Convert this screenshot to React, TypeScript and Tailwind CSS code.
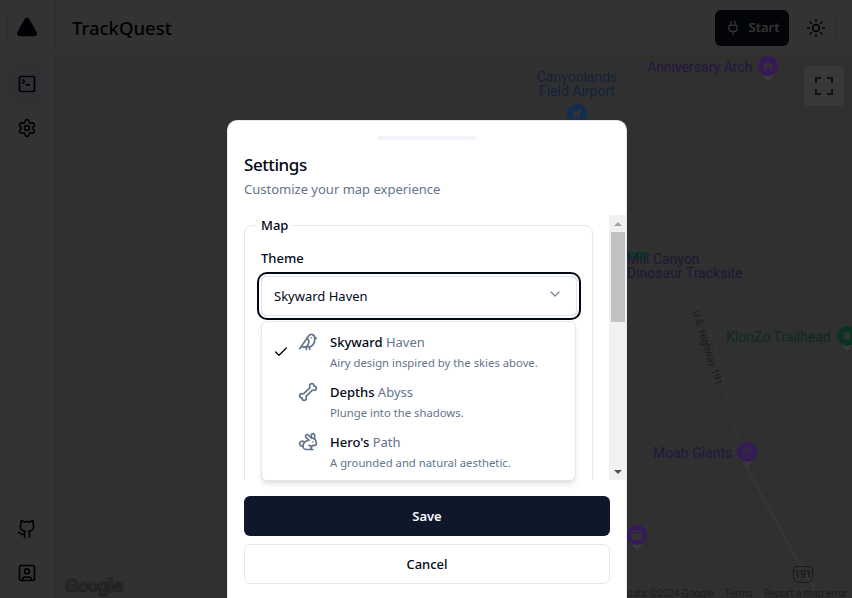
import React from 'react';
import {
  Bird,
  Bone,
  Check,
  ChevronDown,
  Github,
  Plug,
  Rabbit,
  Settings,
  SquareTerminal,
  SquareUser,
  Sun,
  Triangle,
  Camera,
  Plane,
  Landmark,
  Castle,
} from 'lucide-react';

const themes = [
  { icon: Bird, name: 'Skyward', rest: ' Haven', desc: 'Airy design inspired by the skies above.', selected: true },
  { icon: Bone, name: 'Depths', rest: ' Abyss', desc: 'Plunge into the shadows.', selected: false },
  { icon: Rabbit, name: "Hero's", rest: ' Path', desc: 'A grounded and natural aesthetic.', selected: false },
];

// grey point under a map pin
const PinTail = () => (
  <div className="absolute -bottom-[6px] left-1/2 -z-10 h-0 w-0 -translate-x-1/2 border-x-[9px] border-t-[12px] border-x-transparent border-t-[#3c3c3c]" />
);

const MapLayer = () => (
  <div className="absolute inset-0 isolate overflow-hidden font-['Roboto',sans-serif]">
    <svg width="852" height="598" className="absolute inset-0" fill="none" stroke="#343434" strokeWidth="1">
      <path d="M92 56 L86 68 L70 84 L68 98 L56 110" />
      <path d="M143 56 L136 70 L110 78 L90 90 L70 98" />
      <path d="M227 115 L204 134 L188 150 L186 170" />
      <path d="M112 510 L100 540 L80 570 L60 590" />
      <path d="M130 500 L110 510 L105 540 L80 585" />
      <path d="M195 545 L190 570 L175 598" />
      <path d="M627 245 L660 265 L695 300 L715 345 L730 410 L745 465" strokeWidth="1.5" />
      <path d="M630 330 L670 340 L680 375 L650 395" />
      <path d="M645 100 L655 90 L690 110 L740 135" />
      <path d="M745 465 L770 510 L800 565 L815 590" stroke="#353535" strokeWidth="3" />
      <path d="M640 530 L670 515 L700 490 L745 465" strokeWidth="1.5" />
      <path d="M770 450 L800 445 L820 460 L810 475" />
      <path d="M760 480 L790 490 L815 510 L818 520" />
      <path d="M740 585 L760 572 L790 578" />
    </svg>

    {/* labels */}
    <div className="absolute left-[520px] top-[70px] w-[114px] text-center text-sm leading-[14px] text-[#14223a]">
      Canyonlands<br />Field Airport
    </div>
    <div className="absolute left-[647px] top-[59px] text-sm leading-4 text-[#231642]">Anniversary Arch</div>
    <div className="absolute left-[627px] top-[252px] h-[7px] w-5 bg-[#0f3a26]" />
    <div className="absolute left-[627px] top-[252px] text-sm leading-[14px] text-[#1f1636]">
      Mill Canyon<br />Dinosaur Tracksite
    </div>
    <div className="absolute left-[726px] top-[329px] text-sm leading-4 text-[#0e2a1b]">KlonZo Trailhead</div>
    <div className="absolute left-[653px] top-[445px] text-sm leading-4 text-[#231642]">Moab Giants</div>
    <div className="absolute left-[662px] top-[342px] w-[90px] rotate-[72deg] text-center text-[10px] leading-3 text-[#1a1a1a]">
      U.S. Highway 191
    </div>

    {/* pins */}
    <div className="absolute left-[567px] top-[104px] flex h-5 w-5 items-center justify-center rounded-full bg-[#122c52]">
      <Plane size={12} fill="#333333" stroke="#333333" />
    </div>
    <div className="absolute left-[758px] top-[56px] flex h-5 w-5 items-center justify-center rounded-full bg-[#341a58]">
      <PinTail />
      <Camera size={12} fill="#333333" stroke="#341a58" />
    </div>
    <div className="absolute left-[837px] top-[326px] flex h-5 w-5 items-center justify-center rounded-full bg-[#0c3321]">
      <PinTail />
      <div className="h-2 w-2 rounded-full bg-[#333333]" />
    </div>
    <div className="absolute left-[737px] top-[442px] flex h-5 w-5 items-center justify-center rounded-full bg-[#341a58]">
      <PinTail />
      <Landmark size={12} stroke="#333333" />
    </div>
    <div className="absolute left-[627px] top-[525px] flex h-5 w-5 items-center justify-center rounded-full bg-[#341a58]">
      <PinTail />
      <Castle size={12} fill="#333333" stroke="#333333" />
    </div>

    {/* route shield */}
    <div className="absolute left-[793px] top-[566px] flex h-[17px] w-5 items-center justify-center rounded-b-md rounded-t-sm border border-[#1a1a1a] text-[10px] leading-none text-[#141414]">
      191
    </div>

    {/* fullscreen control */}
    <div className="absolute left-[804px] top-[66px] flex h-10 w-10 items-center justify-center rounded-sm bg-[#383838]">
      <svg width="18" height="18" viewBox="0 0 18 18" fill="none" stroke="#111111" strokeWidth="2">
        <path d="M1 6V1H6M12 1H17V6M17 12V17H12M6 17H1V12" />
      </svg>
    </div>

    {/* attribution */}
    <div className="absolute left-[65px] top-[576px] text-[19px] font-bold leading-5 tracking-tight text-[#2b2b2b] [-webkit-text-stroke:1px_#1f1f1f]">
      Google
    </div>
    <div className="absolute left-[627px] top-[588px] flex gap-[11px] whitespace-nowrap text-[10px] leading-[11px] text-[#1c1c1c]">
      <span>data ©2024 Google</span>
      <span>Terms</span>
      <span>Report a map error</span>
    </div>
  </div>
);

const Scrollbar = () => (
  <div className="flex w-[17px] shrink-0 flex-col items-center bg-[#f1f1f1]">
    <div className="flex h-[17px] w-full items-center justify-center">
      <div className="h-0 w-0 border-x-4 border-b-4 border-x-transparent border-b-[#a3a3a3]" />
    </div>
    <div className="h-[90px] w-[14px] bg-[#c1c1c1]" />
    <div className="flex-1" />
    <div className="flex h-[17px] w-full items-center justify-center">
      <div className="h-0 w-0 border-x-4 border-t-4 border-x-transparent border-t-[#505050]" />
    </div>
  </div>
);

const SettingsDrawer = () => (
  <div className="absolute bottom-0 left-[227px] top-[120px] flex w-[400px] flex-col rounded-t-[10px] border border-b-0 border-[#e2e8f0] bg-white">
    <div className="mx-auto mt-[15px] h-1 w-[100px] rounded-full bg-[#f1f5f9]" />
    <div className="px-4 pt-4">
      <h2 className="text-[17px] font-medium leading-[18px] tracking-tight text-[#020817]">Settings</h2>
      <p className="mt-[5px] text-[13px] leading-5 text-[#64748b]">Customize your map experience</p>
    </div>

    {/* scroll area */}
    <div className="relative ml-4 mt-4 flex h-[265px]">
      <div className="flex-1 overflow-hidden pr-4">
        <fieldset className="h-[400px] rounded-lg border border-[#e2e8f0] pl-4 pr-[15px]">
          <legend className="-ml-1 px-1 text-[13px] font-medium leading-5 text-[#020817]">Map</legend>
          <label className="mt-4 block text-[13px] font-medium leading-[14px] text-[#020817]">Theme</label>
          <div className="mt-[11px] flex h-10 items-center justify-between rounded-md border border-[#e2e8f0] pl-3 pr-[13px] text-[13px] text-[#020817] ring-2 ring-[#020817] ring-offset-2">
            <span className="pt-px">Skyward Haven</span>
            <ChevronDown size={16} className="-mt-1 text-[#7c8594]" />
          </div>
        </fieldset>
      </div>
      <Scrollbar />

      {/* select dropdown */}
      <div className="absolute left-[17px] top-[106px] w-[315px] rounded-md border border-[#e2e8f0] bg-white p-1 shadow-md">
        {themes.map(t => (
          <div key={t.name} className="relative flex h-[50px] items-center pl-[32px] pr-2">
            {t.selected && <Check size={16} className="absolute left-[7px] top-[18px] text-[#020817]" />}
            <t.icon size={20} strokeWidth={2} className="-mt-[18px] mr-3 shrink-0 text-[#64748b]" />
            <div>
              <p className="text-[13px] font-normal leading-5 text-[#64748b]">
                <span className="font-medium text-[#020817]">{t.name}</span>
                {t.rest}
              </p>
              <p className="mt-[3px] text-[11.3px] leading-4 text-[#64748b]">{t.desc}</p>
            </div>
          </div>
        ))}
      </div>
    </div>

    <div className="flex flex-col gap-2 px-4 pt-4">
      <button className="h-10 w-full rounded-md bg-[#0f172a] pt-px text-[13px] font-semibold text-[#f8fafc]">Save</button>
      <button className="h-10 w-full rounded-md border border-[#e2e8f0] bg-white pt-px text-[13px] font-medium text-[#020817]">
        Cancel
      </button>
    </div>
  </div>
);

export default function App() {
  return (
    <div className="relative flex h-screen w-screen overflow-hidden bg-white font-['Noto_Sans',sans-serif]">
      <aside className="flex w-14 shrink-0 flex-col border-r border-[#e2e8f0] bg-white">
        <div className="border-b border-[#e2e8f0] pb-2 pl-[7px] pt-[7px]">
          <button className="flex h-10 w-10 items-center justify-center rounded-md border border-[#e2e8f0]">
            <Triangle size={22} fill="#020817" className="text-[#020817]" />
          </button>
        </div>
        <nav className="flex flex-col gap-1 py-2 pl-[7px]">
          <button className="flex h-10 w-10 items-center justify-center rounded-lg bg-[#f1f5f9]">
            <SquareTerminal size={20} className="text-[#020817]" />
          </button>
          <button className="flex h-10 w-10 items-center justify-center rounded-lg">
            <Settings size={20} className="text-[#020817]" />
          </button>
        </nav>
        <nav className="mt-auto flex flex-col gap-1 pb-[5px] pl-[7px]">
          <button className="flex h-10 w-10 items-center justify-center rounded-lg">
            <Github size={20} className="text-[#020817]" />
          </button>
          <button className="flex h-10 w-10 items-center justify-center rounded-lg">
            <SquareUser size={20} className="text-[#020817]" />
          </button>
        </nav>
      </aside>

      <div className="flex min-w-0 flex-1 flex-col">
        <header className="flex h-14 shrink-0 items-center gap-[5px] border-b border-[#e2e8f0] bg-white pl-4 pr-[15px]">
          <h1 className="text-[18.5px] font-medium text-[#020817]">TrackQuest</h1>
          <button className="ml-auto flex h-9 w-[74px] items-center justify-center gap-2 rounded-md bg-[#0f172a] text-[13px] font-semibold text-white">
            <Plug size={16} />
            Start
          </button>
          <button className="flex h-9 w-[43px] items-center justify-center rounded-md border border-[#e2e8f0]">
            <Sun size={20} className="text-[#020817]" />
          </button>
        </header>
        <main className="flex-1 bg-[#f0f0f0]" />
      </div>

      <div className="absolute inset-0 bg-black/80" />
      <MapLayer />
      <SettingsDrawer />
    </div>
  );
}
